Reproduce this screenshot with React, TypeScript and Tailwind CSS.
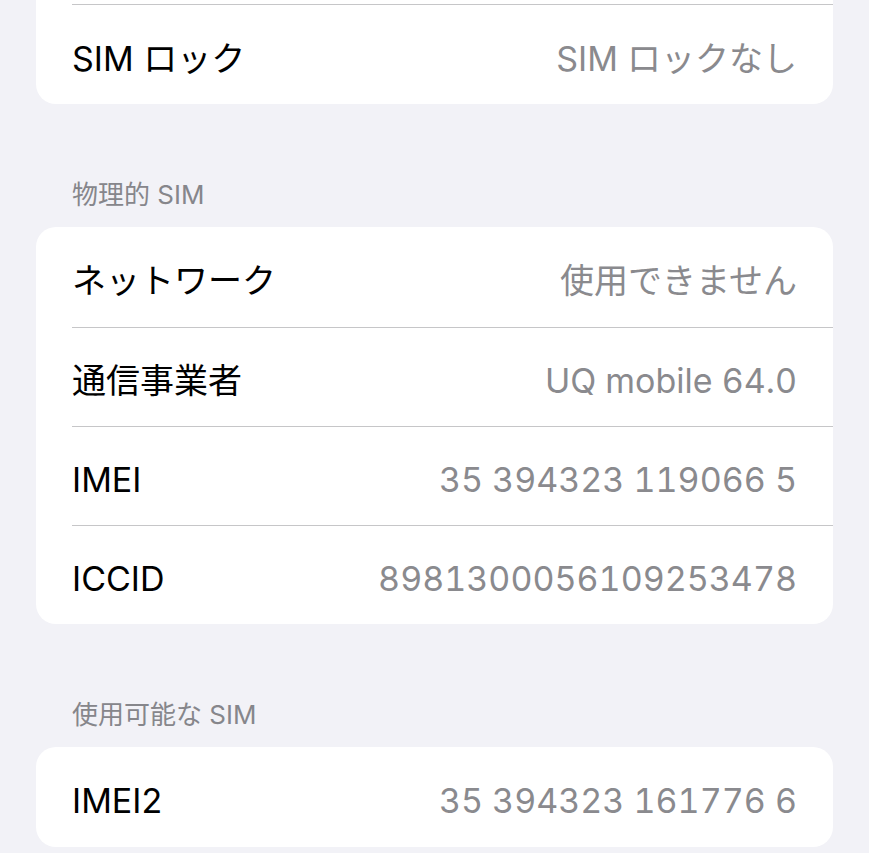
const font = { fontFamily: '"Inter", "Noto Sans CJK JP", sans-serif' };

type Item = { label: string; value: string };

function Row({ item, first }: { item: Item; first?: boolean }) {
  return (
    <div className={`flex h-[99.25px] items-center justify-between pr-[36px] pt-[8px] ${first ? '' : 'border-t border-[#c6c6c8]'}`}>
      <span className="text-[34px] leading-none text-black">{item.label}</span>
      <span className="text-[34px] leading-none text-[#8a8a8e] tabular-nums">{item.value}</span>
    </div>
  );
}

function Card({ items, className = '' }: { items: Item[]; className?: string }) {
  return (
    <div className={`rounded-[20px] bg-white pl-[36px] ${className}`}>
      {items.map((item, i) => (
        <Row key={item.label} item={item} first={i === 0} />
      ))}
    </div>
  );
}

function Header({ title }: { title: string }) {
  return (
    <div className="flex h-[123px] items-end pb-[16px] pl-[36px]">
      <span className="text-[26px] leading-[32px] text-[#86868b]">{title}</span>
    </div>
  );
}

export default function App() {
  return (
    <div className="h-[853px] overflow-hidden bg-[#f2f2f7] px-[36px]" style={font}>
      <div className="rounded-b-[20px] bg-white pl-[36px]">
        <div className="h-[4px]" />
        <div className="border-t border-[#c6c6c8]">
          <Row item={{ label: 'SIM ロック', value: 'SIM ロックなし' }} first />
        </div>
      </div>

      <Header title="物理的 SIM" />
      <Card
        items={[
          { label: 'ネットワーク', value: '使用できません' },
          { label: '通信事業者', value: 'UQ mobile 64.0' },
          { label: 'IMEI', value: '35 394323 119066 5' },
          { label: 'ICCID', value: '8981300056109253478' },
        ]}
      />

      <Header title="使用可能な SIM" />
      <Card items={[{ label: 'IMEI2', value: '35 394323 161776 6' }]} />
    </div>
  );
}
